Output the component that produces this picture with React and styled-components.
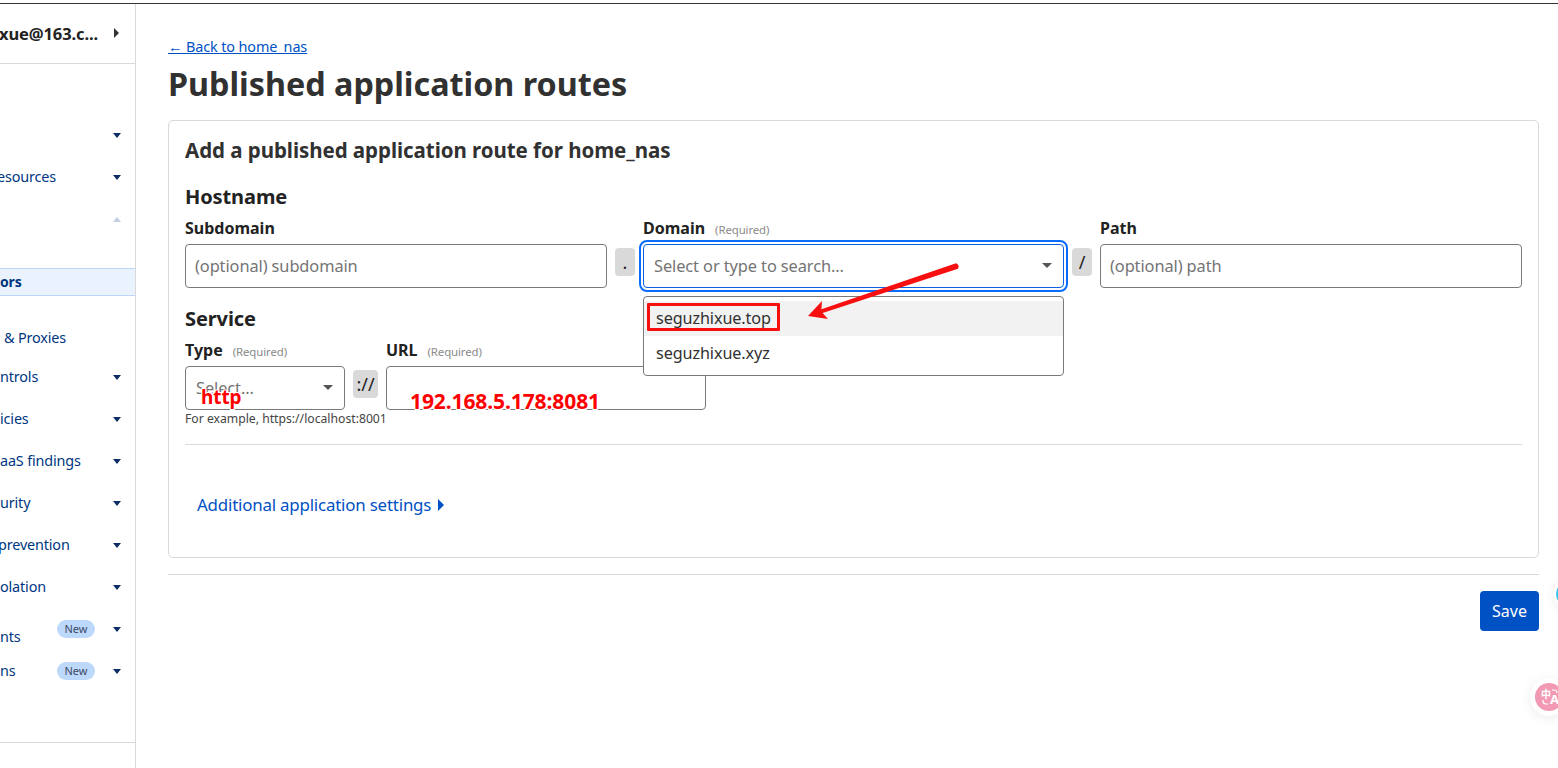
import React from 'react';
import styled, { createGlobalStyle } from 'styled-components';

const GlobalStyle = createGlobalStyle`
  html, body {
    margin: 0;
    height: 100%;
    background: #fff;
    overflow: hidden;
  }
  body {
    font-family: "Noto Sans", "Liberation Sans", sans-serif;
    color: #313131;
  }
`;

const Page = styled.div`
  position: relative;
  display: flex;
  width: 1558px;
  height: 768px;
  padding-top: 3px;
  box-sizing: border-box;
  overflow: hidden;
`;

const TopLine = styled.div`
  position: absolute;
  top: 3px;
  left: 0;
  right: 0;
  height: 1px;
  background: #333;
`;

const Sidebar = styled.aside`
  display: flex;
  flex-direction: column;
  flex: none;
  width: 136px;
  height: 765px;
  box-sizing: border-box;
  border-right: 1px solid #d9d9d9;
  overflow: hidden;
`;

const Account = styled.div`
  display: flex;
  align-items: center;
  justify-content: space-between;
  height: 61px;
  flex: none;
  padding-right: 16px;
  box-sizing: border-box;
  border-bottom: 1px solid #d9d9d9;
  font-size: 16.5px;
  font-weight: 700;
  letter-spacing: -0.1px;
  color: #222;
  white-space: nowrap;
`;

const AccountName = styled.span`
  margin-left: -1px;
`;

const Nav = styled.nav`
  display: flex;
  flex-direction: column;
  flex: 1;
  padding-top: 50px;
`;

const NavRow = styled.div`
  display: flex;
  align-items: center;
  height: ${(p) => p.$height || 42}px;
  padding-right: 14px;
  margin-top: ${(p) => p.$top || 0}px;
  font-size: 14.4px;
  letter-spacing: -0.15px;
  color: #003681;
  white-space: nowrap;
`;

const ActiveRow = styled.div`
  display: flex;
  align-items: center;
  height: 28px;
  box-sizing: border-box;
  margin-top: 28px;
  padding-bottom: 2px;
  background: #eaf2fe;
  border-top: 1px solid #bcd6f9;
  border-bottom: 1px solid #bcd6f9;
  font-size: 14px;
  font-weight: 700;
  letter-spacing: -0.15px;
  color: #003681;
`;

const NavLabel = styled.span`
  flex: 1;
  margin-left: ${(p) => p.$offset || 0}px;
  padding-bottom: 2px;
  transform: translateY(${(p) => p.$shift || 0}px);
`;

const Badge = styled.span`
  display: inline-flex;
  align-items: center;
  justify-content: center;
  width: 38px;
  height: 18px;
  margin-right: 18px;
  padding-bottom: 1px;
  box-sizing: border-box;
  border-radius: 9px;
  background: #bcd8fb;
  font-size: 11px;
  letter-spacing: 0;
  color: #3c4a68;
`;

const Caret = styled.span`
  flex: none;
  width: 0;
  height: 0;
  border-left: ${(p) => (p.$wide ? 5 : 4)}px solid transparent;
  border-right: ${(p) => (p.$wide ? 5 : 4)}px solid transparent;
  border-${(p) => (p.$up ? 'bottom' : 'top')}: 5px solid ${(p) => (p.$up ? '#c2cfe0' : p.$color || '#0d2d66')};
`;

const AccountCaret = styled.span`
  flex: none;
  width: 0;
  height: 0;
  border-top: 5px solid transparent;
  border-bottom: 5px solid transparent;
  border-left: 5px solid #333;
`;

const SidebarFoot = styled.div`
  flex: none;
  height: 25px;
  border-top: 1px solid #d9d9d9;
`;

const Main = styled.main`
  display: flex;
  flex-direction: column;
  flex: none;
  width: 1371px;
  margin-left: 32px;
  padding-top: 34px;
`;

const BackLink = styled.a`
  display: block;
  font-size: 14.4px;
  line-height: 20px;
  letter-spacing: -0.1px;
  color: #0051c3;
  text-decoration: underline;
`;

const PageTitle = styled.h1`
  margin: 4px 0 15px;
  font-size: 32.3px;
  line-height: 44px;
  font-weight: 700;
  color: #313131;
`;

const Card = styled.section`
  display: flex;
  flex-direction: column;
  height: 438px;
  box-sizing: border-box;
  padding: 14px 16px 0;
  border: 1px solid #d9d9d9;
  border-radius: 5px;
`;

const CardTitle = styled.h2`
  margin: 0;
  font-size: 20.5px;
  line-height: 30px;
  font-weight: 700;
  letter-spacing: -0.05px;
  color: #313131;
`;

const SectionTitle = styled.h3`
  margin: ${(p) => p.$top}px 0 0;
  font-size: 20px;
  line-height: 28px;
  font-weight: 700;
  letter-spacing: -0.1px;
  color: #222;
`;

const FieldGrid = styled.div`
  display: flex;
  align-items: flex-end;
  gap: 8px;
  margin-top: 6px;
`;

const Field = styled.div`
  display: flex;
  flex-direction: column;
  flex: none;
  width: ${(p) => p.$width}px;
`;

const Label = styled.label`
  display: flex;
  align-items: baseline;
  gap: 10px;
  height: 22px;
  margin-bottom: 5px;
  line-height: 22px;
  font-size: 16px;
  font-weight: 700;
  color: #222;
`;

const Required = styled.span`
  font-size: 11.4px;
  font-weight: 400;
  letter-spacing: -0.1px;
  color: #8a8a8a;
`;

const Control = styled.div`
  position: relative;
  display: flex;
  align-items: center;
  justify-content: space-between;
  height: 44px;
  box-sizing: border-box;
  padding: 0 ${(p) => (p.$select ? 11 : 9)}px 2px ${(p) => (p.$select ? 10 : 9)}px;
  border: 1px solid #797979;
  border-radius: 4px;
  background: #fff;
  font-size: 16.4px;
  letter-spacing: -0.1px;
  color: #747474;
  white-space: nowrap;
  ${(p) => p.$focus && 'border-color: #0b62e0; outline: 2px solid #0a6cff; outline-offset: 2px;'}
`;

const Joiner = styled.span`
  display: flex;
  align-items: center;
  justify-content: center;
  flex: none;
  width: ${(p) => p.$width}px;
  height: 28px;
  margin-bottom: 12px;
  border-radius: 4px;
  background: #d9d9d9;
  font-size: 18px;
  color: #222;
`;

const Menu = styled.div`
  position: absolute;
  top: 51px;
  left: -1px;
  width: 421px;
  height: 80px;
  box-sizing: border-box;
  padding: 4px 0;
  border: 1px solid #797979;
  border-radius: 4px;
  background: #fff;
  z-index: 1;
`;

const MenuItem = styled.div`
  display: flex;
  align-items: center;
  height: 35px;
  box-sizing: border-box;
  padding: 0 0 2px 12px;
  font-size: 16.2px;
  letter-spacing: -0.1px;
  color: #313131;
  background: ${(p) => (p.$hover ? '#f2f2f2' : '#fff')};
`;

const HelpText = styled.p`
  margin: 1px 0 0;
  font-size: 12.2px;
  line-height: 16px;
  color: #444;
  white-space: nowrap;
`;

const Divider = styled.hr`
  width: 100%;
  margin: ${(p) => p.$top}px 0 0;
  border: 0;
  border-top: 1px solid #d9d9d9;
`;

const MoreLink = styled.a`
  display: flex;
  align-items: center;
  gap: 7px;
  margin: 48px 0 0 12px;
  font-size: 16.9px;
  line-height: 24px;
  letter-spacing: -0.2px;
  color: #0051c3;
  text-decoration: none;
`;

const MoreCaret = styled.span`
  width: 0;
  height: 0;
  border-top: 6px solid transparent;
  border-bottom: 6px solid transparent;
  border-left: 6px solid #0051c3;
`;

const Actions = styled.div`
  display: flex;
  justify-content: flex-end;
  margin-top: 16px;
`;

const SaveButton = styled.button`
  width: 59px;
  height: 40px;
  padding: 0;
  border: 0;
  border-radius: 4px;
  background: #0051c3;
  font-family: inherit;
  font-size: 16px;
  color: #fff;
`;

const Marker = styled.span`
  position: absolute;
  left: ${(p) => p.$left}px;
  top: ${(p) => p.$top}px;
  line-height: 24px;
  font-size: ${(p) => p.$size}px;
  font-weight: 700;
  letter-spacing: -0.1px;
  color: #ff0000;
  text-shadow: 1px 1px 0 #fff, -1px 1px 0 #fff, 0 2px 0 #fff, 1px -1px 0 #fff, -1px -1px 0 #fff;
`;

const MarkBox = styled.div`
  position: absolute;
  left: 647px;
  top: 303px;
  width: 133px;
  height: 28px;
  box-sizing: border-box;
  border: 3px solid #f50f0f;
  border-radius: 1px;
  z-index: 2;
`;

const ArrowSvg = styled.svg`
  position: absolute;
  left: 790px;
  top: 250px;
  z-index: 2;
`;

const FloatDot = styled.div`
  position: absolute;
  left: ${(p) => p.$left}px;
  top: ${(p) => p.$top}px;
  display: flex;
  align-items: center;
  padding-left: ${(p) => p.$pad}px;
  box-sizing: border-box;
  width: ${(p) => p.$size}px;
  height: ${(p) => p.$size}px;
  border-radius: 50%;
  background: #fff;
  box-shadow: 0 2px 12px rgba(0, 0, 0, 0.08);
`;

const RingIcon = styled.span`
  flex: none;
  width: 24px;
  height: 24px;
  box-sizing: border-box;
  border: 3px solid #35c3f0;
  border-radius: 50%;
`;

const topRows = [
  { id: 'a', label: '' },
  { id: 'b', label: 'esources', offset: -3 },
  { id: 'c', label: '', up: true },
];

const lowerRows = [
  { id: 'd', label: 'ntrols' },
  { id: 'e', label: 'icies' },
  { id: 'f', label: 'aaS findings' },
  { id: 'g', label: 'urity' },
  { id: 'h', label: 'prevention', offset: -2 },
  { id: 'i', label: 'olation' },
  { id: 'j', label: 'nts', badge: true, shift: 8 },
  { id: 'k', label: 'ns', badge: true },
];

export default function App() {
  return (
    <Page>
      <GlobalStyle />
      <TopLine />
      <Sidebar>
        <Account>
          <AccountName>xue@163.c...</AccountName>
          <AccountCaret />
        </Account>
        <Nav>
          {topRows.map((row) => (
            <NavRow key={row.id}>
              <NavLabel $offset={row.offset}>{row.label}</NavLabel>
              <Caret $up={row.up} />
            </NavRow>
          ))}
          <ActiveRow>ors</ActiveRow>
          <NavRow $height={36} $top={24}>
            <NavLabel $offset={4}>&amp; Proxies</NavLabel>
          </NavRow>
          {lowerRows.map((row) => (
            <NavRow key={row.id}>
              <NavLabel $offset={row.offset} $shift={row.shift}>{row.label}</NavLabel>
              {row.badge && <Badge>New</Badge>}
              <Caret />
            </NavRow>
          ))}
        </Nav>
        <SidebarFoot />
      </Sidebar>

      <Main>
        <BackLink href="#">← Back to home_nas</BackLink>
        <PageTitle>Published application routes</PageTitle>
        <Card>
          <CardTitle>Add a published application route for home_nas</CardTitle>
          <SectionTitle $top={18}>Hostname</SectionTitle>
          <FieldGrid>
            <Field $width={422}>
              <Label>Subdomain</Label>
              <Control>(optional) subdomain</Control>
            </Field>
            <Joiner $width={20}>.</Joiner>
            <Field $width={421}>
              <Label>
                Domain <Required>(Required)</Required>
              </Label>
              <Control $select $focus>
                Select or type to search...
                <Caret $wide $color="#555" />
                <Menu>
                  <MenuItem $hover>seguzhixue.top</MenuItem>
                  <MenuItem>seguzhixue.xyz</MenuItem>
                </Menu>
              </Control>
            </Field>
            <Joiner $width={20}>/</Joiner>
            <Field $width={422}>
              <Label>Path</Label>
              <Control>(optional) path</Control>
            </Field>
          </FieldGrid>
          <SectionTitle $top={17}>Service</SectionTitle>
          <FieldGrid>
            <Field $width={160}>
              <Label>
                Type <Required>(Required)</Required>
              </Label>
              <Control $select>
                Select...
                <Caret $wide $color="#555" />
              </Control>
            </Field>
            <Joiner $width={25}>://</Joiner>
            <Field $width={320}>
              <Label>
                URL <Required>(Required)</Required>
              </Label>
              <Control />
            </Field>
          </FieldGrid>
          <HelpText>For example, https://localhost:8001</HelpText>
          <Divider $top={17} />
          <MoreLink href="#">
            Additional application settings
            <MoreCaret />
          </MoreLink>
        </Card>
        <Divider $top={16} />
        <Actions>
          <SaveButton>Save</SaveButton>
        </Actions>
      </Main>

      <Marker $left={201} $top={385} $size={19}>http</Marker>
      <Marker $left={410} $top={389} $size={21}>192.168.5.178:8081</Marker>
      <MarkBox />
      <ArrowSvg width="180" height="80" viewBox="0 0 180 80">
        <path d="M166 13.2 Q170 15 168 18.8 L32.6 63 L38 69 L18 66 L32 51 L31.4 59.2 Z" fill="#f80f0f" />
      </ArrowSvg>
      <FloatDot $left={1554} $top={575} $size={37} $pad={2}>
        <RingIcon />
      </FloatDot>
      <FloatDot $left={1530} $top={678} $size={38} $pad={5}>
        <svg width="28" height="28" viewBox="0 0 28 28">
          <circle cx="14" cy="14" r="14" fill="#f29ab4" />
          <text x="6" y="15" fontSize="10" fontWeight="700" fill="#fff" fontFamily="Noto Sans CJK SC, sans-serif">中</text>
          <text x="15" y="21" fontSize="13" fontWeight="700" fill="#fff" fontFamily="Noto Sans, sans-serif">A</text>
          <path d="M17 7 h2 a3 3 0 0 1 3 3 M8 17 v1 a3 3 0 0 0 3 3 h2" fill="none" stroke="#fff" strokeWidth="1.2" />
        </svg>
      </FloatDot>
    </Page>
  );
}
